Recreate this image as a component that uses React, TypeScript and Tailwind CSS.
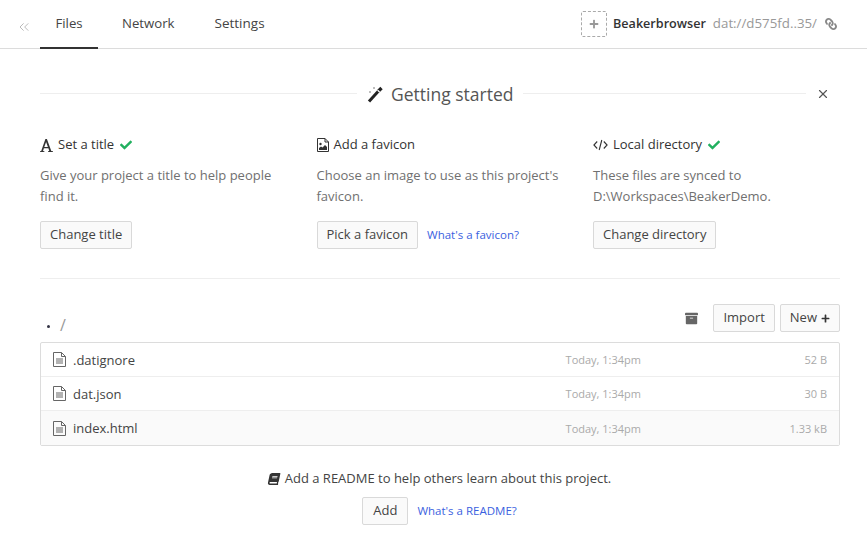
import { FaArchive, FaBook, FaCheck, FaLink, FaPlus } from "react-icons/fa";
import { ChevronsLeft, X } from "lucide-react";

const files = [
  { name: ".datignore", date: "Today, 1:34pm", size: "52 B" },
  { name: "dat.json", date: "Today, 1:34pm", size: "30 B" },
  { name: "index.html", date: "Today, 1:34pm", size: "1.33 kB" },
];

function FileIcon() {
  return (
    <svg width="13" height="15" viewBox="0 0 13 15" fill="none" stroke="#666" className="flex-none">
      <path d="M.5.5h8l4 4v10H.5z" />
      <path d="M8.5.5v4h4" />
      <path d="M3 7h7M3 9h7M3 11h7" />
    </svg>
  );
}

function ImageFileIcon() {
  return (
    <svg width="12" height="14" viewBox="0 0 12 14" fill="none" className="flex-none">
      <path d="M.5.5h7.5l3.5 3.5v9.5H.5z" stroke="#333" />
      <path d="M8 .5V4h3.5" stroke="#333" />
      <circle cx="3.5" cy="6" r="1.2" fill="#333" />
      <path d="M2 12V10l2-1.5 1.5 1L8 7l2 2v3z" fill="#333" />
    </svg>
  );
}

function SerifA() {
  return (
    <svg width="13" height="13" viewBox="0 0 13 13" fill="#333" className="flex-none">
      <path d="M0 13v-.8l1.2-.3L5.4 0h1.5l4.4 11.9 1.7.3v.8H8v-.8l1.3-.3-.9-2.7H3.9l-.9 2.7 1.4.3v.8zM4.3 8h3.6L6.1 2.9z" fillRule="evenodd" />
    </svg>
  );
}

function CodeIcon() {
  return (
    <svg width="15" height="12" viewBox="0 0 15 12" fill="none" stroke="#333" strokeWidth="1.1" className="flex-none">
      <path d="M4.2 2.5L.9 6l3.3 3.5M10.8 2.5L14.1 6l-3.3 3.5M8.8 1L6.2 11" />
    </svg>
  );
}

function Wand() {
  return (
    <svg width="17" height="17" viewBox="0 0 17 17" fill="none" className="flex-none">
      <path d="M2 15.5L11.5 5" stroke="#222" strokeWidth="3" />
      <path d="M11.5 5L14.5 2" stroke="#222" strokeWidth="3.4" />
      <path d="M10.6 4.2l2 1.8" stroke="#fff" strokeWidth="1.2" />
      <path d="M7 1v2M8 2H6M3 5v2M4 6H2" stroke="#999" strokeWidth=".8" />
    </svg>
  );
}

function Btn({ children, className = "" }: { children: React.ReactNode; className?: string }) {
  return (
    <button className={`h-[28px] px-[9px] flex items-center gap-1 bg-[#fafafa] border border-[#d9d9d9] rounded-[2px] text-[13px] text-[#444] whitespace-nowrap ${className}`}>
      {children}
    </button>
  );
}

function Step({ icon, title, done, lines, button, link }: { icon: React.ReactNode; title: string; done: boolean; lines: string[]; button: string; link?: string }) {
  return (
    <div className="w-[276.5px] flex-none">
      <div className="flex items-center gap-[5px] h-[20px] text-[13px] text-[#333]">
        {icon}
        {title}
        {done && <FaCheck className="ml-[1px] text-[#22b05f] w-[12px] h-[12px]" />}
      </div>
      <div className="mt-[10px] text-[13px] leading-[21px] text-[#707070]">
        {lines.map((l) => (
          <div key={l}>{l}</div>
        ))}
      </div>
      <div className="mt-[14px] flex items-center gap-[9px]">
        <Btn>{button}</Btn>
        {link && <a className="text-[11.5px] text-[#3b5fe0]">{link}</a>}
      </div>
    </div>
  );
}

export default function App() {
  return (
    <div className="w-[867px] h-[541px] overflow-hidden bg-white" style={{ fontFamily: '"Open Sans", sans-serif' }}>
      {/* Header */}
      <header className="h-[49px] border-b border-[#dcdcdc] flex items-stretch">
        <div className="w-[40px] flex items-center justify-center pl-[7px] pt-[5px]">
          <ChevronsLeft className="w-[16px] h-[16px] text-[#bbb]" strokeWidth={1.5} />
        </div>
        <div className="w-[58px] h-[49px] border-b-2 border-[#333] flex justify-center pt-[14px] text-[13.2px] text-[#444]">Files</div>
        <div className="ml-[24px] pt-[14px] text-[13.2px] text-[#444]">Network</div>
        <div className="ml-[40px] pt-[13px] text-[13.5px] text-[#444]">Settings</div>
        <div className="ml-auto flex items-center pr-[30px]">
          <div className="w-[26px] h-[26px] border border-dashed border-[#aaa] rounded-[2px] flex items-center justify-center">
            <FaPlus className="w-[10px] h-[10px] text-[#999]" />
          </div>
          <span className="ml-[6px] text-[12.6px] font-semibold text-[#333]">Beakerbrowser</span>
          <span className="ml-[7px] text-[13.3px] text-[#999]">dat://d575fd..35/</span>
          <FaLink className="ml-[8px] w-[12px] h-[12px] text-[#888] -scale-x-100" />
        </div>
      </header>

      {/* Getting started */}
      <section className="mr-[27px] ml-[40px]">
        <div className="mt-[33px] flex items-center h-[24px]">
          <div className="w-[317px] h-px bg-[#eee] -mt-[2px]" />
          <div className="ml-[10px] mr-[10px] flex items-center gap-[7px] text-[17.5px] text-[#555]">
            <Wand />
            Getting started
          </div>
          <div className="flex-1 h-px bg-[#eee] -mt-[2px]" />
          <X className="ml-[10px] mr-[10px] w-[14px] h-[14px] text-[#555]" />
        </div>
        <div className="mt-[29px] flex">
          <Step icon={<SerifA />} title="Set a title" done lines={["Give your project a title to help people", "find it."]} button="Change title" />
          <Step icon={<ImageFileIcon />} title="Add a favicon" done={false} lines={["Choose an image to use as this project's", "favicon."]} button="Pick a favicon" link="What's a favicon?" />
          <Step icon={<CodeIcon />} title="Local directory" done lines={["These files are synced to", "D:\\Workspaces\\BeakerDemo."]} button="Change directory" />
        </div>
        <div className="mt-[29px] h-px bg-[#eee]" />
      </section>

      {/* Files */}
      <section className="mr-[27px] ml-[40px]">
        <div className="mt-[25px] flex items-center h-[28px]">
          <span className="ml-[7px] w-[3px] h-[3px] rounded-full bg-[#334] mt-[17px]" />
          <span className="ml-[10px] text-[16px] text-[#999] mt-[13px]">/</span>
          <FaArchive className="ml-auto w-[13px] h-[13px] text-[#666]" />
          <Btn className="ml-[15px]">Import</Btn>
          <Btn className="ml-[5px]">
            New <FaPlus className="w-[9px] h-[9px] text-[#333]" />
          </Btn>
        </div>
        <div className="mt-[10px] border border-[#dcdcdc] rounded-[2px]">
          {files.map((f, i) => (
            <div key={f.name} className={`h-[34px] flex items-center px-[12px] text-[13px] ${i < 2 ? "border-b border-[#eee]" : "bg-[#fafafa]"}`}>
              <FileIcon />
              <span className="ml-[7px] pt-[2px] text-[#444]">{f.name}</span>
              <span className="ml-auto pt-[2px] text-[11px] text-[#aaa]">{f.date}</span>
              <span className="w-[186px] pt-[2px] text-right text-[11px] text-[#aaa]">{f.size}</span>
            </div>
          ))}
        </div>
      </section>

      {/* Readme */}
      <section className="mt-[23px] flex flex-col items-center pl-[12px]">
        <div className="flex items-center text-[13px] text-[#444] h-[20px]">
          <FaBook className="mr-[5px] w-[12px] h-[12px] text-[#333] -skew-x-12" />
          Add a README to help others learn about this project.
        </div>
        <div className="mt-[8px] flex items-center gap-[9px]">
          <Btn className="!px-[10px]">Add</Btn>
          <a className="text-[11.5px] text-[#3b5fe0]">What's a README?</a>
        </div>
      </section>
    </div>
  );
}
